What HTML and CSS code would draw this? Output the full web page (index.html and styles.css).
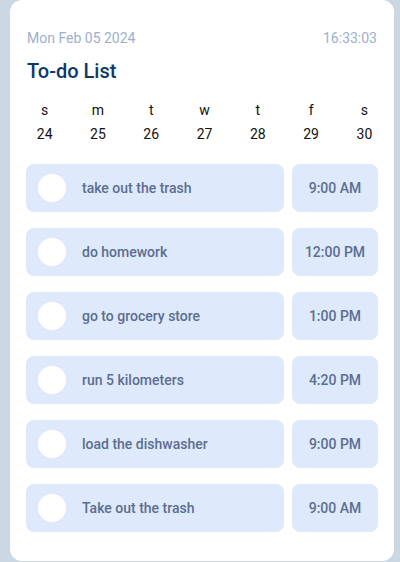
FILE: index.html
```html
<!DOCTYPE html>
<html>
<head>
<meta charset="utf-8">
<link rel="stylesheet" href="styles.css">
</head>
<body>
<div class="card">
  <div class="top">
    <span class="date">Mon Feb 05 2024</span>
    <span class="date">16:33:03</span>
  </div>
  <h1 class="title">To-do List</h1>
  <div class="week">
    <span>s</span><span>m</span><span>t</span><span>w</span><span>t</span><span>f</span><span>s</span>
    <span>24</span><span>25</span><span>26</span><span>27</span><span>28</span><span>29</span><span>30</span>
  </div>
  <div class="tasks">
    <div class="task"><div class="name"><span class="dot"></span>take out the trash</div><div class="time">9:00 AM</div></div>
    <div class="task"><div class="name"><span class="dot"></span>do homework</div><div class="time">12:00 PM</div></div>
    <div class="task"><div class="name"><span class="dot"></span>go to grocery store</div><div class="time">1:00 PM</div></div>
    <div class="task"><div class="name"><span class="dot"></span>run 5 kilometers</div><div class="time">4:20 PM</div></div>
    <div class="task"><div class="name"><span class="dot"></span>load the dishwasher</div><div class="time">9:00 PM</div></div>
    <div class="task"><div class="name"><span class="dot"></span>Take out the trash</div><div class="time">9:00 AM</div></div>
  </div>
</div>
</body>
</html>
```
FILE: styles.css
```css
html, body {
  margin: 0;
  padding: 0;
}
body {
  background: #cbd7e3;
  font-family: Roboto, "Noto Sans", sans-serif;
  width: 400px;
  height: 562px;
  overflow: hidden;
}
.card {
  margin-left: 10px;
  width: 384px;
  height: 561px;
  box-sizing: border-box;
  background: #fff;
  border-radius: 12px;
  padding: 28px 16px 0 16px;
}
.top {
  display: flex;
  justify-content: space-between;
  padding: 0 1px;
  font-size: 14px;
  line-height: 20px;
  color: #9bb0cf;
}
.title {
  margin: 9px 0 0 1px;
  font-size: 20px;
  line-height: 28px;
  font-weight: 500;
  color: #0c3a68;
}
.week {
  display: grid;
  grid-template-columns: repeat(7, 53.3px);
  row-gap: 4px;
  margin: 15px 0 0 -8px;
  font-size: 14px;
  line-height: 20px;
  color: #111;
  text-align: center;
}
.tasks {
  display: flex;
  flex-direction: column;
  gap: 16px;
  margin-top: 20px;
}
.task {
  display: flex;
  gap: 8px;
  height: 48px;
}
.name {
  flex: 1;
  display: flex;
  align-items: center;
  background: #dfe9fc;
  border-radius: 8px;
  padding-left: 12px;
  font-size: 14px;
  font-weight: 500;
  color: #5b6e90;
}
.dot {
  width: 28px;
  height: 28px;
  border-radius: 50%;
  background: #fff;
  margin-right: 16px;
}
.time {
  width: 86px;
  display: flex;
  align-items: center;
  justify-content: center;
  background: #dfe9fc;
  border-radius: 8px;
  font-size: 14px;
  font-weight: 500;
  color: #5b6e90;
}
```
